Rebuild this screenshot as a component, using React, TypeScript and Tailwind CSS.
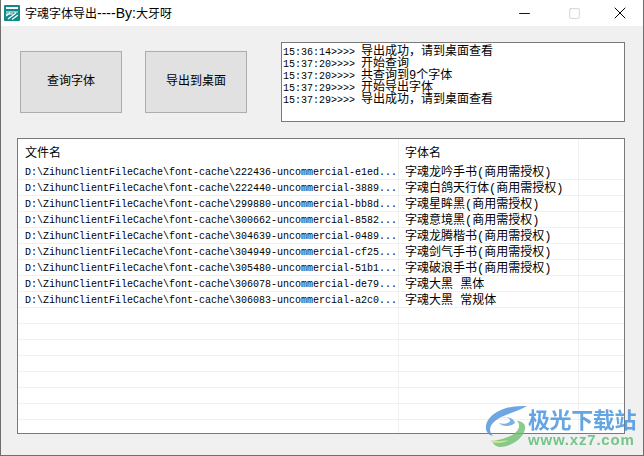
import { Minus, Square, X } from 'lucide-react';

const fontStack = "font-['Liberation_Mono','Noto_Sans_CJK_SC',monospace]";

const logs = [
  ['15:36:14>>>> ', '导出成功，请到桌面查看'],
  ['15:37:20>>>> ', '开始查询'],
  ['15:37:20>>>> ', '共查询到9个字体'],
  ['15:37:29>>>> ', '开始导出字体'],
  ['15:37:29>>>> ', '导出成功，请到桌面查看'],
];

const files = [
  ['222436-uncommercial-e1ed...', '字魂龙吟手书(商用需授权)'],
  ['222440-uncommercial-3889...', '字魂白鸽天行体(商用需授权)'],
  ['299880-uncommercial-bb8d...', '字魂星眸黑(商用需授权)'],
  ['300662-uncommercial-8582...', '字魂意境黑(商用需授权)'],
  ['304639-uncommercial-0489...', '字魂龙腾楷书(商用需授权)'],
  ['304949-uncommercial-cf25...', '字魂剑气手书(商用需授权)'],
  ['305480-uncommercial-51b1...', '字魂破浪手书(商用需授权)'],
  ['306078-uncommercial-de79...', '字魂大黑 黑体'],
  ['306083-uncommercial-a2c0...', '字魂大黑 常规体'],
];

const blanks = [0, 1, 2, 3, 4, 5, 6, 7];

function Row({ path, name }: { path: string; name: string }) {
  return (
    <div className="flex h-4 shrink-0 border-b border-[#f0f0f0] pl-px">
      <div className="w-[380px] shrink-0 border-r border-[#f0f0f0] pl-[6px] pt-[1px] text-[10px] leading-[15px] text-black whitespace-pre overflow-hidden">
        {path}
      </div>
      <div className="w-[180px] shrink-0 border-r border-[#f0f0f0] pl-[6px] pt-[3px] text-xs leading-[12px] text-black whitespace-pre">
        {name}
      </div>
      <div className="flex-1" />
    </div>
  );
}

function Watermark() {
  return (
    <div className="absolute left-[484px] top-[404px] flex items-start gap-[1px] opacity-80 blur-[0.4px]">
      <svg width="42" height="44" viewBox="0 0 42 44" className="shrink-0">
        <path d="M42 2C26 1 8 6 2 18c-3 7 0 13 6 14-4-4-4-10 1-14C16 11 30 9 42 2z" fill="#4a90d9" />
        <path d="M8 17c6-5 15-5 17-1 1 3-6 5-11 3 3 4 12 4 16 0-1-6-14-9-22-2z" fill="#5aa0e0" />
        <path d="M14 43c12 0 24-8 26-18 1-5-3-8-8-8 3 3 3 7-1 11-6 6-16 8-24 9 1 3 3 5 7 6z" fill="#6cc070" />
        <path d="M6 38c6 2 13 1 18-2-6 1-13 2-18 0z" fill="#d8e070" />
      </svg>
      <div className="flex flex-col">
        <span className="font-['Noto_Sans_CJK_SC',sans-serif] text-[22px] leading-[28px] font-bold tracking-[-0.4px] text-[#3f8fdc]">
          极光下载站
        </span>
        <span className="font-['Liberation_Sans',sans-serif] text-[15px] leading-[16px] font-bold tracking-[0.8px] text-[#56bb70]">
          www.xz7.com
        </span>
      </div>
    </div>
  );
}

export default function App() {
  return (
    <div className={`relative w-[644px] h-[456px] overflow-hidden flex flex-col bg-[#f0f0f0] border-x border-b border-[#6e6e6e] ${fontStack}`}>
      {/* title bar */}
      <div className="h-[26px] shrink-0 flex items-center bg-white">
        <svg width="16" height="16" viewBox="0 0 16 16" className="ml-[3px] mr-[5px] shrink-0">
          <rect width="16" height="16" rx="1" fill="#0f8a8a" />
          <rect x="2" y="2" width="12" height="2" fill="#fff" />
          <path d="M2 7h12M2 9l7 0M12 8l-8 6M14 10l-6 4.500M6 8l-4 3" stroke="#fff" strokeWidth="1.200" fill="none" />
        </svg>
        <span className="font-['Liberation_Sans','Noto_Sans_CJK_SC',sans-serif] text-xs text-black">
          字魂字体导出<span className="text-sm">----By:</span>大牙呀
        </span>
        <div className="ml-auto flex items-center">
          <Minus size={17} strokeWidth={1.3} className="mr-[35px] text-black" />
          <Square size={13} strokeWidth={1.300} className="mr-[29px] text-[#c4c4c4]" />
          <X size={20} strokeWidth={1.200} className="mr-[13px] text-black" />
        </div>
      </div>

      {/* buttons and log */}
      <div className="flex items-start pt-4 h-[112px] shrink-0">
        <div className="flex gap-[23px] pl-[19px] pt-[9px]">
          <button className="w-[102px] h-[62px] bg-[#e1e1e1] border border-[#adadad] text-xs text-black">查询字体</button>
          <button className="w-[102px] h-[62px] bg-[#e1e1e1] border border-[#adadad] text-xs text-black">导出到桌面</button>
        </div>
        <div className="ml-[34px] w-[344px] h-[80px] bg-white border border-[#7a7a7a] pl-[1px] pt-[1px]">
          {logs.map(([time, msg], i) => (
            <div key={i} className="h-3 leading-3 whitespace-pre text-black">
              <span className="text-[10px]">{time}</span>
              <span className="text-xs">{msg}</span>
            </div>
          ))}
        </div>
      </div>

      {/* file table */}
      <div className="ml-4 w-[608px] h-[296px] bg-white border border-[#7a7a7a] overflow-hidden flex flex-col">
        <div className="flex h-[25px] shrink-0 pl-px">
          <div className="w-[380px] shrink-0 border-r border-[#f0f0f0] pl-[6px] pt-[8px] text-xs leading-[15px] text-black">文件名</div>
          <div className="w-[180px] shrink-0 border-r border-[#f0f0f0] pl-[6px] pt-[8px] text-xs leading-[15px] text-black">字体名</div>
        </div>
        {files.map(([path, name]) => (
          <Row key={path} path={`D:\\ZihunClientFileCache\\font-cache\\${path}`} name={name} />
        ))}
        {blanks.map((n) => (
          <Row key={n} path="" name="" />
        ))}
      </div>

      <Watermark />
    </div>
  );
}
